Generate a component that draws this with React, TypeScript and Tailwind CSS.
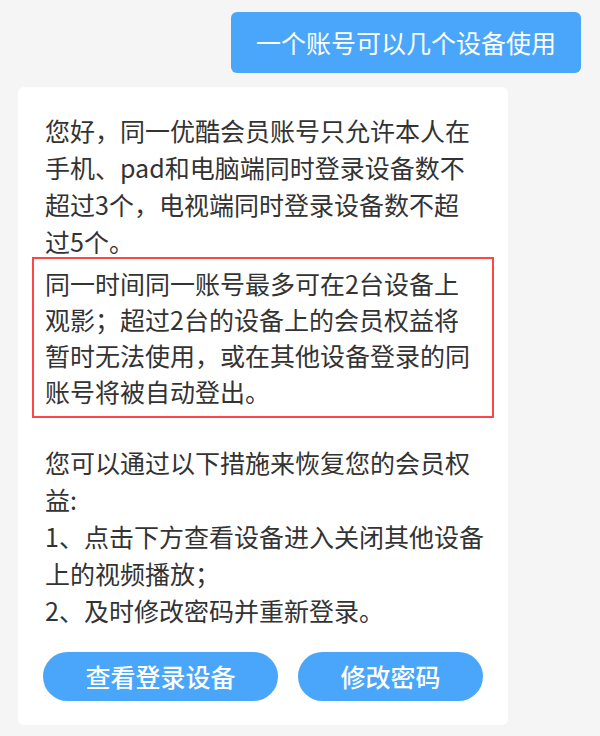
import React from "react";

const font = { fontFamily: '"Noto Sans CJK SC", "Noto Sans", sans-serif' };

function Lines({ lines }: { lines: string[] }) {
  return (
    <>
      {lines.map((l, i) => (
        <div key={i} className="whitespace-nowrap">
          {l}
        </div>
      ))}
    </>
  );
}

export default function App() {
  return (
    <div
      className="w-[600px] h-[736px] bg-[#f5f5f5] pt-[12px] overflow-hidden"
      style={font}
    >
      <div className="flex justify-end pr-[19px]">
        <div className="h-[61px] px-[25px] flex items-center rounded-[6px] bg-[#4aa6fb] text-white text-[25px] leading-none">
          一个账号可以几个设备使用
        </div>
      </div>

      <div className="mt-[14px] ml-[18px] w-[490px] bg-white rounded-[6px] pt-[24.5px] pb-[24px] pl-[27px] pr-[12px] text-[#333333] text-[25px]">
        <div className="leading-[37px]">
          <Lines
            lines={[
              "您好，同一优酷会员账号只允许本人在",
              "手机、pad和电脑端同时登录设备数不",
              "超过3个，电视端同时登录设备数不超",
              "过5个。",
            ]}
          />
        </div>

        <div className="-mt-[2.5px] -ml-[13px] w-[462px] border-2 border-[#ff4646] pl-[11px] pt-[6px] pb-[7px] leading-[36px]">
          <Lines
            lines={[
              "同一时间同一账号最多可在2台设备上",
              "观影；超过2台的设备上的会员权益将",
              "暂时无法使用，或在其他设备登录的同",
              "账号将被自动登出。",
            ]}
          />
        </div>

        <div className="mt-[25.5px] leading-[37px]">
          <Lines
            lines={[
              "您可以通过以下措施来恢复您的会员权",
              "益:",
              "1、点击下方查看设备进入关闭其他设备",
              "上的视频播放；",
              "2、及时修改密码并重新登录。",
            ]}
          />
        </div>

        <div className="mt-[23.5px] flex gap-[20px] -ml-[2px]">
          <button className="h-[49px] w-[235px] rounded-full bg-[#4aa6fa] text-white text-[25px] font-medium flex items-center justify-center">
            查看登录设备
          </button>
          <button className="h-[49px] w-[185px] rounded-full bg-[#4aa6fa] text-white text-[25px] font-medium flex items-center justify-center">
            修改密码
          </button>
        </div>
      </div>
    </div>
  );
}
